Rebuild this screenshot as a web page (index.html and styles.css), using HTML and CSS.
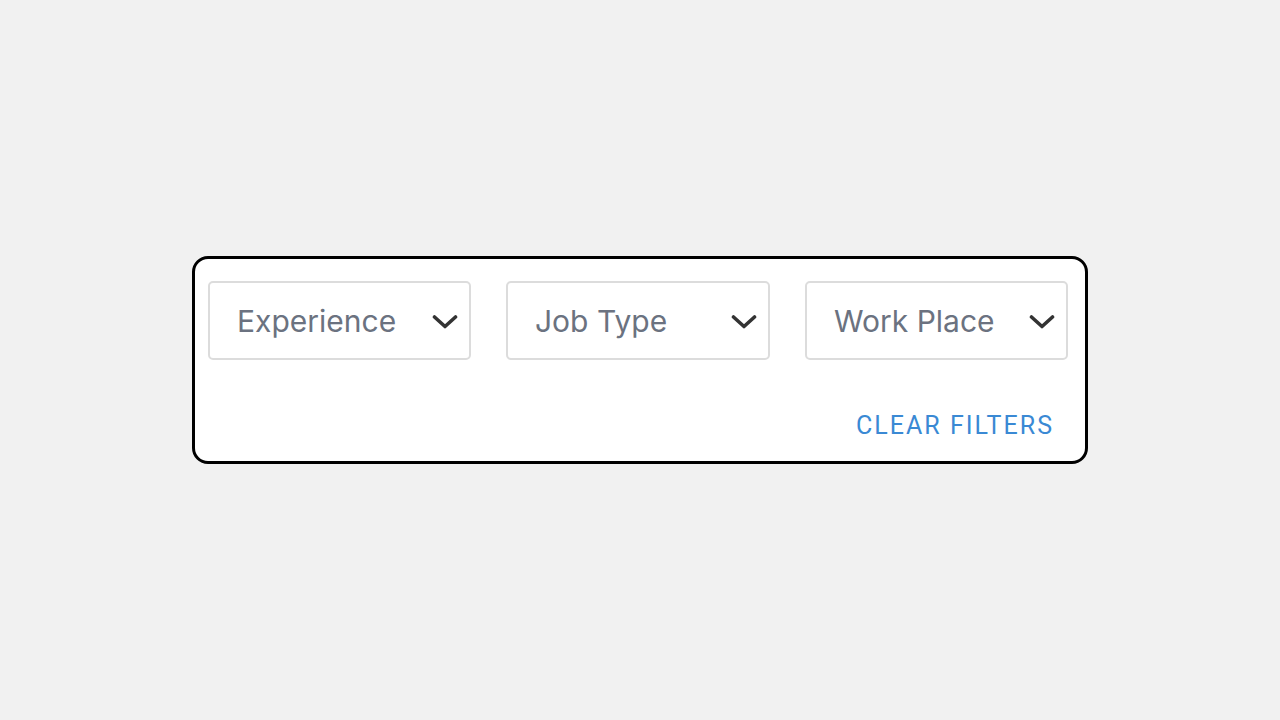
FILE: index.html
```html
<!DOCTYPE html>
<html>
<head>
<meta charset="utf-8">
<link rel="stylesheet" href="styles.css">
</head>
<body>
<div class="card">
  <div class="selects">
    <div class="select"><span class="label">Experience</span>
      <svg class="chev" viewBox="0 0 26 16"><path d="M2.5 3 L13 12.5 L23.5 3" /></svg></div>
    <div class="select"><span class="label">Job Type</span>
      <svg class="chev" viewBox="0 0 26 16"><path d="M2.5 3 L13 12.5 L23.5 3" /></svg></div>
    <div class="select"><span class="label">Work Place</span>
      <svg class="chev" viewBox="0 0 26 16"><path d="M2.5 3 L13 12.5 L23.5 3" /></svg></div>
  </div>
  <div class="actions"><button class="clear">CLEAR FILTERS</button></div>
</div>
</body>
</html>
```
FILE: styles.css
```css
html, body { margin: 0; padding: 0; }
body {
  background: #f1f1f1;
  width: 1280px;
  height: 720px;
  display: flex;
  align-items: center;
  justify-content: center;
}
.card {
  box-sizing: border-box;
  width: 896px;
  height: 208px;
  background: #fff;
  border: 3px solid #000;
  border-radius: 16px;
  padding: 22px 16px 0 13px;
  display: flex;
  flex-direction: column;
}
.selects {
  display: grid;
  grid-template-columns: 263px 264px 263px;
  column-gap: 35px;
}
.select {
  box-sizing: border-box;
  height: 79px;
  border: 2px solid #dcdcdc;
  border-radius: 5px;
  display: flex;
  align-items: center;
  justify-content: space-between;
  padding: 0 11px 0 27px;
}
.label {
  font-family: Inter, sans-serif;
  font-size: 30px;
  color: #6b7280;
}
.chev {
  width: 26px;
  height: 16px;
  margin-top: 3px;
  fill: none;
  stroke: #333;
  stroke-width: 3.6;
  stroke-linecap: round;
  stroke-linejoin: round;
}
.actions {
  display: flex;
  justify-content: flex-end;
  padding-top: 51px;
  padding-right: 15px;
}
.clear {
  border: 0;
  background: none;
  padding: 0;
  font-family: Roboto, sans-serif;
  font-size: 25px;
  font-weight: 400;
  letter-spacing: 2px;
  color: #3a89d4;
}
```
